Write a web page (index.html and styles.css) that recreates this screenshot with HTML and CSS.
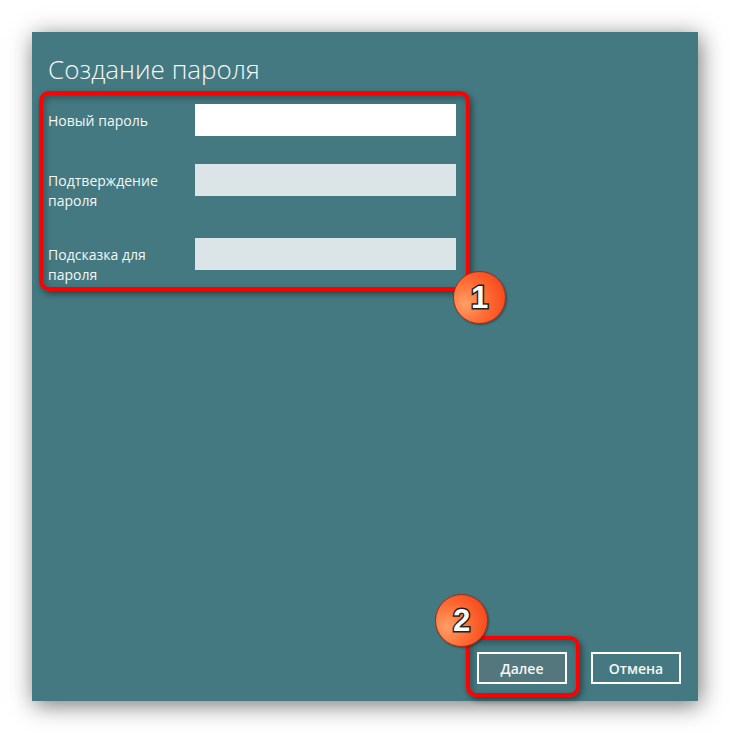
FILE: index.html
```html
<!DOCTYPE html>
<html lang="ru">
<head>
<meta charset="utf-8">
<title>Создание пароля</title>
<link rel="stylesheet" href="styles.css">
</head>
<body>
<main class="dialog">
  <h1 class="title">Создание пароля</h1>
  <form class="form">
    <label class="label">Новый пароль</label>
    <div class="field field-active"></div>
    <label class="label">Подтверждение пароля</label>
    <div class="field"></div>
    <label class="label">Подсказка для пароля</label>
    <div class="field"></div>
  </form>
  <div class="actions">
    <button class="btn btn-primary" type="button">Далее</button>
    <button class="btn" type="button">Отмена</button>
  </div>
  <div class="mark mark-form"></div>
  <div class="mark mark-next"></div>
  <div class="badge badge-one"><span class="badge-num">1</span></div>
  <div class="badge badge-two"><span class="badge-num">2</span></div>
</main>
</body>
</html>
```
FILE: styles.css
```css
html, body { margin: 0; padding: 0; background: #fff; }
body { width: 730px; height: 733px; padding: 32px; box-sizing: border-box; overflow: hidden; font-family: "Open Sans", "Noto Sans", sans-serif; }
.dialog {
  position: relative; width: 666px; height: 669px; box-sizing: border-box;
  background: #447981; color: #fff;
  padding: 19px 16px 17px 16px;
  display: flex; flex-direction: column;
  box-shadow: 2px 4px 22px rgba(0,0,0,.55);
}
.title { margin: 0 0 17px; font-size: 26px; font-weight: 300; line-height: 36px; color: #f4f8f8; }
.form { display: grid; grid-template-columns: 147px 261px; grid-auto-rows: 32px; row-gap: 28px; align-content: start; flex: 1; }
.label { font-size: 14px; line-height: 20px; width: 130px; padding-top: 7px; color: #f4f8f8; letter-spacing: .02px; }
.field { background: #dbe4e6; height: 32px; }
.field-active { background: #fff; }
.form > :nth-child(n+5) { margin-top: 14px; }
.actions { display: flex; justify-content: flex-end; gap: 24px; padding-right: 1px; }
.btn {
  width: 90px; height: 32px; box-sizing: border-box; border: 2px solid #fff; background: transparent;
  color: #f4f8f8; font: 600 14px "Open Sans", "Noto Sans", sans-serif; padding: 0;
}
.btn-primary { background: #53777d; }
.mark { position: absolute; border: 4px solid #fe0000; border-radius: 10px; box-shadow: 2px 3px 6px rgba(0,0,0,.45), inset 2px 3px 6px rgba(0,0,0,.3); box-sizing: border-box; }
.mark-form { left: 7px; top: 59px; width: 431px; height: 200px; }
.mark-next { left: 434px; top: 604px; width: 114px; height: 61px; }
.badge {
  position: absolute; width: 53px; height: 53px; box-sizing: border-box; border-radius: 50%;
  background: radial-gradient(circle at 22% 62%, #ffa066 0%, #ff6a32 45%, #f03c14 100%);
  border: 1px solid #a52a18; box-shadow: 1px 1px 2px rgba(0,0,0,.35);
  display: flex; align-items: center; justify-content: center;
}
.badge-one { left: 421px; top: 239px; }
.badge-two { left: 403px; top: 562px; }
.badge-num {
  font: 700 31px/1 "Liberation Sans", sans-serif; color: #fff;
  -webkit-text-stroke: 3px #222; paint-order: stroke fill;
}
```
